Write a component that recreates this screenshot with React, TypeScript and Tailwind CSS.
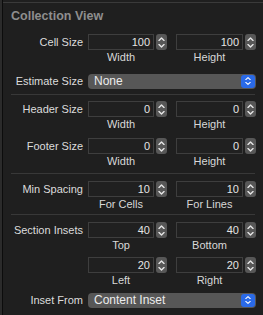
const font = { fontFamily: '"Liberation Sans", Arial, sans-serif' };

const Stepper = () => (
    <div className="flex h-4 w-[11px] flex-col items-center justify-center gap-[3px] rounded-[3px] bg-[#575757]">
        <svg width="7" height="4" viewBox="0 0 7 4" fill="none">
            <path d="M1 3.5 L3.5 1 L6 3.5" stroke="#e6e6e6" strokeWidth="1.4" strokeLinecap="round" strokeLinejoin="round" />
        </svg>
        <svg width="7" height="4" viewBox="0 0 7 4" fill="none">
            <path d="M1 0.5 L3.5 3 L6 0.5" stroke="#e6e6e6" strokeWidth="1.4" strokeLinecap="round" strokeLinejoin="round" />
        </svg>
    </div>
);

const Field = ({ value, sub, wide }: { value: string; sub: string; wide?: boolean }) => (
    <div className="flex flex-col">
        <div className="flex items-center gap-[2px]">
            <div
                className={`flex h-4 items-center justify-end border border-[#3e3e3e] bg-[#202020] pr-[3px] text-[11px] text-[#e4e4e4] ${wide ? "w-[67px]" : "w-[66px]"}`}
            >
                {value}
            </div>
            <Stepper />
        </div>
        <div className={`h-[13px] pt-px text-center text-[11px] leading-[13px] text-[#d8d8d8] ${wide ? "w-[67px]" : "w-[66px]"}`}>
            {sub}
        </div>
    </div>
);

const Row = ({
    label,
    a,
    b,
    subA,
    subB,
    className,
}: {
    label: string;
    a: string;
    b: string;
    subA: string;
    subB: string;
    className?: string;
}) => (
    <div className={`flex items-start ${className ?? ""}`}>
        <div className="h-4 w-[83px] text-right text-[11px] leading-4 text-[#dcdcdc]">{label}</div>
        <div className="ml-[5px] flex gap-[9px]">
            <Field value={a} sub={subA} />
            <Field value={b} sub={subB} wide />
        </div>
    </div>
);

const Popup = ({ label, value, className }: { label: string; value: string; className?: string }) => (
    <div className={`flex items-center ${className ?? ""}`}>
        <div className="w-[83px] text-right text-[11px] leading-4 text-[#dcdcdc]">{label}</div>
        <div className="ml-[5px] flex h-[15px] w-[168px] items-center justify-between rounded-[4px] bg-[#575757] pl-[6px] pr-px">
            <span className="text-[12px] leading-none text-[#ececec]">{value}</span>
            <div className="flex h-[13px] w-[14px] flex-col items-center justify-center gap-[2px] rounded-[3px] bg-[#2a6ae8]">
                <svg width="6" height="3" viewBox="0 0 6 3" fill="none">
                    <path d="M0.8 2.6 L3 0.6 L5.2 2.6" stroke="#fff" strokeWidth="1.1" strokeLinecap="round" strokeLinejoin="round" />
                </svg>
                <svg width="6" height="3" viewBox="0 0 6 3" fill="none">
                    <path d="M0.8 0.4 L3 2.4 L5.2 0.4" stroke="#fff" strokeWidth="1.1" strokeLinecap="round" strokeLinejoin="round" />
                </svg>
            </div>
        </div>
    </div>
);

const Separator = ({ className }: { className?: string }) => (
    <div className={`ml-[11px] h-px w-[244px] bg-[#383838] ${className ?? ""}`} />
);

export default function App() {
    return (
        <div className="flex h-[315px] w-[263px] overflow-hidden bg-[#262626]" style={font}>
            <div className="w-[2px] shrink-0 bg-[#2b2b2b]" />
            <div className="w-px shrink-0 bg-[#0c0c0c]" />
            <div className="flex flex-1 flex-col bg-[#1f1f1f]">
                <div className="h-[2px] bg-[#1f1f1f]" />
                <div className="h-px bg-[#3a3a3a]" />
                <div className="mt-[6px] ml-[8px] text-[12.5px] font-bold leading-[15px] text-[#8e8e8e]">
                    Collection View
                </div>
                <div className="-ml-[3px] flex flex-col">
                    <Row label="Cell Size" a="100" b="100" subA="Width" subB="Height" className="mt-[10px]" />
                    <Popup label="Estimate Size" value="None" className="mt-[10px]" />
                    <Separator className="mt-[5px]" />
                    <Row label="Header Size" a="0" b="0" subA="Width" subB="Height" className="mt-[6px]" />
                    <Row label="Footer Size" a="0" b="0" subA="Width" subB="Height" className="mt-[8px]" />
                    <Separator className="mt-[6px]" />
                    <Row label="Min Spacing" a="10" b="10" subA="For Cells" subB="For Lines" className="mt-[7px]" />
                    <Separator className="mt-[4px]" />
                    <Row label="Section Insets" a="40" b="40" subA="Top" subB="Bottom" className="mt-[7px]" />
                    <Row label="" a="20" b="20" subA="Left" subB="Right" className="mt-[6px]" />
                    <Popup label="Inset From" value="Content Inset" className="mt-[6px]" />
                </div>
            </div>
        </div>
    );
}
